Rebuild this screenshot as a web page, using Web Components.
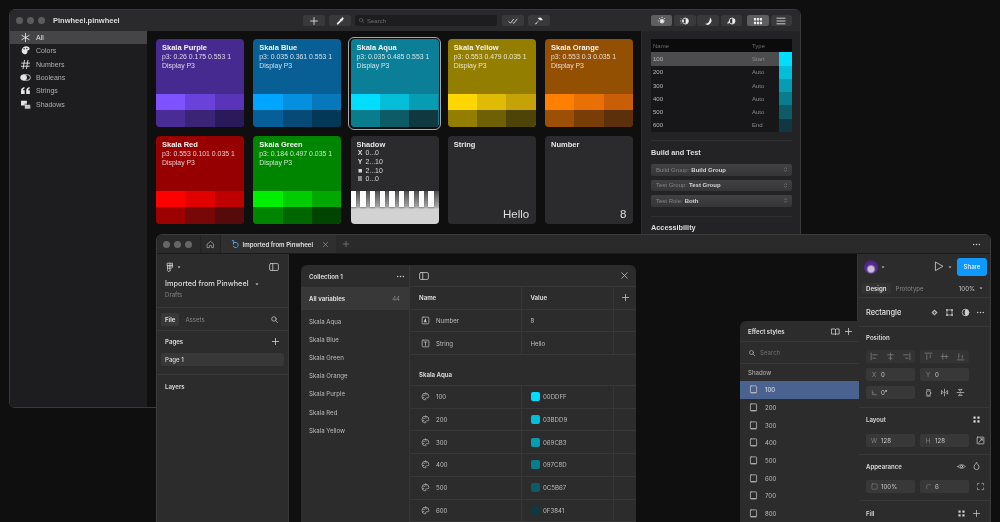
<!DOCTYPE html>
<html>
<head>
<meta charset="utf-8">
<title>Pinwheel</title>
<style>
  html, body { margin: 0; height: 522px; overflow: hidden; background: #0f0f10; }
  body { position: relative; font-family: "Liberation Sans", sans-serif; filter: blur(.4px); }
</style>
</head>
<body>
<pw-window></pw-window>
<fig-window></fig-window>

<script>
// icons, all drawn on a 16x16 box
const S = 'fill="none" stroke="currentColor" stroke-width="1.3" stroke-linecap="round" stroke-linejoin="round"';
const ICONS = {
  all: `<path ${S} stroke-width="2.4" d="M8 2v12M2.8 5l10.4 6M13.2 5 2.8 11"/>`,
  colors: `<path fill="currentColor" d="M7 2c4-1 7 1 7 3.500 0 2-2 2-3 2.500-.8.500.5 2-.5 3.500C9 13.500 6 14 4 12 1.500 9.500 2 3.500 7 2z"/><circle cx="6" cy="5.500" r="1.100" fill="#1d1d1f"/><circle cx="10" cy="5" r="1" fill="#1d1d1f"/>`,
  hash: `<path ${S} stroke-width="1.9" d="M6.500 2 4.500 14M11.500 2l-2 12M2.500 6h11.500M2 10.500h11.500"/>`,
  toggle: `<rect x="1" y="4" width="14" height="8" rx="4" fill="none" stroke="currentColor" stroke-width="1.200"/><rect x="1" y="4" width="9" height="8" rx="4" fill="currentColor"/>`,
  quote: `<path fill="currentColor" d="M1.500 13V8.500C1.500 5.500 3.500 3.500 6.500 3v2.200C5 5.600 4.600 6.500 4.500 7.500h2.300V13zM9 13V8.500C9 5.500 11 3.500 14 3v2.200c-1.500.4-1.900 1.300-2 2.300h2.300V13z"/>`,
  shadows: `<path fill="currentColor" d="M1.500 2.500h8.500v7H1.500z"/><path fill="currentColor" d="M7 8.500h8v5.500H7z" opacity=".85"/><path d="M6.500 7.500H11" stroke="#1d1d1f"/>`,
  plus: `<path ${S} d="M8 2.500v11M2.500 8h11"/>`,
  dropper: `<path fill="currentColor" d="M11 2.500a1.800 1.800 0 0 1 2.500 2.500l-2 2 .7.700-1 1-.7-.7-5.500 5.500H3v-2l5.500-5.500-.7-.7 1-1 .7.700z"/>`,
  checks: `<path ${S} stroke-width="1.600" d="M1.500 9 4 11.500 9 5M8 11l1 .8L14.500 5"/>`,
  hammer: `<path fill="currentColor" d="M6 3.500c2-1.500 4.500-1.200 6 0l2 2-1.500 1.500-1.200-.8-1.300 1-1.300-1.300L3 13.500 1.800 12.300l7-6.500c-.8-1-1.800-1.700-2.800-2.300z"/>`,
  search: `<circle cx="7" cy="7" r="4" ${S}/><path ${S} d="m10 10 3.500 3.500"/>`,
  sun: `<circle cx="8" cy="8" r="3" fill="currentColor"/><path ${S} stroke-dasharray=".6 2.500" d="M8 2v12M2 8h12M3.800 3.800l8.400 8.400M12.200 3.800l-8.400 8.400"/>`,
  sunhalf: `<path fill="currentColor" d="M9 3a5 5 0 0 1 0 10z"/><path ${S} d="M9 3a5 5 0 0 0 0 10"/><circle cx="5" cy="8" r="1.600" fill="currentColor"/><path ${S} stroke-dasharray=".6 2" d="M1 8h2M2 4.500 3.500 6M2 11.500 3.500 10"/>`,
  moon: `<path fill="currentColor" d="M11 2.500A6 6 0 0 1 3 12.500c4 .5 8.500-3.500 8-10z"/>`,
  moonhalf: `<path fill="currentColor" d="M10 3a5 5 0 0 1 0 10z"/><path ${S} d="M10 3a5 5 0 0 0 0 10"/><path fill="currentColor" d="M5.500 6.500a2.800 2.800 0 0 1-4 4.500c1.800 0 3.500-2 4-4.500z"/>`,
  grid: `<g fill="currentColor"><rect x="1.500" y="3" width="3.500" height="4" rx=".6"/><rect x="6.300" y="3" width="3.500" height="4" rx=".6"/><rect x="11" y="3" width="3.500" height="4" rx=".6"/><rect x="1.500" y="9" width="3.500" height="4" rx=".6"/><rect x="6.300" y="9" width="3.500" height="4" rx=".6"/><rect x="11" y="9" width="3.500" height="4" rx=".6"/></g>`,
  list: `<path ${S} stroke-width="1.500" d="M1.500 3.500h13M1.500 8h13M1.500 12.500h13"/>`,
  updown: `<path ${S} d="M5.500 6 8 3.500 10.500 6M5.500 10 8 12.500 10.500 10"/>`,
  home: `<path ${S} d="M2.500 7 8 2.500 13.500 7v6.500h-3.500V10H6v3.500H2.500z"/>`,
  close: `<path ${S} d="m3 3 10 10M13 3 3 13"/>`,
  more: `<g fill="currentColor"><circle cx="3" cy="8" r="1.300"/><circle cx="8" cy="8" r="1.300"/><circle cx="13" cy="8" r="1.300"/></g>`,
  panel: `<rect x="1" y="2.500" width="14" height="11" rx="2" ${S}/><path ${S} d="M6 2.500v11"/>`,
  figma: `<path ${S} d="M4 2h8v4H4zM4 6h8M8 2v12M4 6v4h4M4 10v2a2 2 0 0 0 4 2M8 10a3 2 0 0 0 4-2 2 2 0 0 0-4-2"/>`,
  tabfile: `<path fill="none" stroke="#5aa9e6" stroke-width="1.400" d="M3 2.500h2.500a6 6 0 0 1 0 6v-3h4.500a4.200 4.200 0 1 1-5 5.500"/>`,
  palette: `<path ${S} d="M8 2a6 6 0 1 0-.5 12c1.500 0 1.200-1.200.8-2s.3-1.800 1.500-1.800h2.400C14 10.200 14 9 14 8a6 6 0 0 0-6-6z"/><g fill="currentColor"><circle cx="5.500" cy="6" r="1"/><circle cx="9" cy="5" r="1"/><circle cx="4.800" cy="9.500" r="1"/></g>`,
  num: `<rect x="2" y="2" width="12" height="12" rx="1.500" ${S}/><path fill="currentColor" d="M5 11V9.500L7.500 5h1.500v4.500h1.200V11z"/>`,
  str: `<rect x="2" y="2" width="12" height="12" rx="1.500" ${S}/><path ${S} d="M5.500 5.500h5M8 5.500v6"/>`,
  style: `<rect x="2.500" y="1.500" width="11" height="12" rx="1.200" ${S}/><path ${S} stroke-width="2" d="M3.500 14h9"/>`,
  book: `<path ${S} d="M1.500 3.500h5L8 4.500l1.500-1h5v9h-5L8 13.500l-1.500-1h-5zM8 4.500v9"/>`,
  play: `<path ${S} stroke-width="1.100" d="M3.500 2v12L14 8z"/>`,
  diamond: `<path fill="currentColor" d="M8 2.500 13.500 8 8 13.500 2.500 8z" opacity=".85"/><path stroke="#2c2c2c" stroke-width="1" d="M8 5.500v5M5.500 8h5"/>`,
  frame: `<path ${S} d="M3.500 5v6M12.500 5v6M5 3.500h6M5 12.500h6"/><g fill="currentColor"><rect x="2" y="2" width="3" height="3"/><rect x="11" y="2" width="3" height="3"/><rect x="2" y="11" width="3" height="3"/><rect x="11" y="11" width="3" height="3"/></g>`,
  contrast: `<circle cx="8" cy="8" r="6" ${S}/><path fill="currentColor" d="M8 2a6 6 0 0 1 0 12c-2-3-2-9 0-12z"/>`,
  autolayout: `<g fill="currentColor"><rect x="2.500" y="2.500" width="4" height="4" rx=".6"/><rect x="9.500" y="2.500" width="4" height="4" rx=".6"/><rect x="2.500" y="9.500" width="4" height="4" rx=".6"/><rect x="9.500" y="9.500" width="4" height="4" rx=".6"/></g>`,
  resize: `<rect x="2" y="2" width="12" height="12" rx="1" ${S}/><path ${S} d="M5 11.500 11 5M11 8V5H8"/>`,
  eye: `<path ${S} d="M1.500 8C4 4 12 4 14.500 8 12 12 4 12 1.500 8z"/><circle cx="8" cy="8" r="2" ${S}/>`,
  drop: `<path ${S} d="M8 1.500c2.500 3 4.500 5 4.500 7.500a4.500 4.500 0 0 1-9 0c0-2.500 2-4.500 4.500-7.500z"/>`,
  corners: `<path ${S} d="M2.500 5.500v-3h3M10.500 2.500h3v3M13.500 10.500v3h-3M5.500 13.500h-3v-3"/>`,
  opacity: `<rect x="2" y="2" width="12" height="12" rx="1.500" ${S}/>`,
  radius: `<path ${S} d="M4 13V7a3 3 0 0 1 3-3h6"/>`,
  angle: `<path ${S} d="M3 3v10h10M3 8a5 5 0 0 1 5 5"/>`,
  alignl: `<path ${S} d="M2 2v12M5 5h8M5 11h5" stroke-width="1"/>`,
  alignc: `<path ${S} d="M8 2v12M3 5h10M5 11h6" stroke-width="1"/>`,
  alignr: `<path ${S} d="M14 2v12M3 5h8M6 11h5" stroke-width="1"/>`,
  alignt: `<path ${S} d="M2 2h12M5 5v8M11 5v5" stroke-width="1"/>`,
  alignm: `<path ${S} d="M2 8h12M5 3v10M11 5v6" stroke-width="1"/>`,
  alignb: `<path ${S} d="M2 14h12M5 3v8M11 6v5" stroke-width="1"/>`,
  rotate: `<circle cx="8" cy="9" r="4" ${S}/><path ${S} d="M4 4c2-2 6-2 8 0M4 14c2 1 6 1 8 0"/>`,
  fliph: `<path ${S} d="M8 2v12M2.500 5v6l3-3zM13.500 5v6l-3-3z"/>`,
  flipv: `<path ${S} d="M2 8h12M5 2.500h6l-3 3zM5 13.500h6l-3-3z"/>`,
  chev: `<path fill="currentColor" d="M4 6.500h8L8 11z"/>`
};
function icon(name, size) {
  size = size || 10;
  return `<svg width="${size}" height="${size}" viewBox="0 0 16 16" style="display:block;flex:none">${ICONS[name]}</svg>`;
}

// base class: shadow root filled once from css() + html()
class Box extends HTMLElement {
  constructor() {
    super();
    this._root = this.attachShadow({ mode: 'open' });
  }
  connectedCallback() {
    this._root.innerHTML = `<style>${this.css()}</style>${this.html()}`;
  }
  a(name, dflt) {
    return this.hasAttribute(name) ? this.getAttribute(name) : (dflt === undefined ? '' : dflt);
  }
  css() { return ':host{display:block}'; }
  html() { return '<slot></slot>'; }
}

// ---- Pinwheel (mac window) ----
class PwTool extends Box {
  css() {
    return `:host{display:flex;align-items:center;justify-content:center;height:11px;width:${this.a('w', 22)}px;
      border-radius:2px;background:${this.hasAttribute('on') ? '#5e5e60' : '#39393b'};color:#ececec}`;
  }
  html() { return icon(this.a('icon'), this.a('s', 10)); }
}
customElements.define('pw-tool', PwTool);

class PwSide extends Box {
  css() {
    return `:host{display:flex;align-items:center;height:13.300px;padding-left:9.500px;
      font:400 7px "Liberation Sans",sans-serif;color:#b0b0b2;
      ${this.hasAttribute('on') ? 'background:#454547;color:#e0e0e0;' : ''}}
      .i{width:12px;margin-right:4.500px;display:flex;justify-content:center;color:#e4e4e4}`;
  }
  html() { return `<span class="i">${icon(this.a('icon'), 11)}</span><slot></slot>`; }
}
customElements.define('pw-side', PwSide);

class PwCard extends Box {
  css() {
    return `:host{display:flex;flex-direction:column;height:88px;border-radius:4px;overflow:hidden;box-sizing:border-box;
      background:${this.a('bg')};color:#fff;font:400 6.900px/9px "Liberation Sans",sans-serif;position:relative}
      :host([sel]){overflow:visible}
      .t{flex:1;padding:4px 6px 0}
      b{display:block;font-size:7.500px;color:#f4f4f4}
      .s{opacity:.8;white-space:nowrap}
      .r{display:flex;height:16.700px}
      .r i{flex:1}
      .ring{position:absolute;inset:-2.500px;border:1.500px solid #a9a9ab;border-radius:6px;pointer-events:none}`;
  }
  html() {
    const row = (s, last) => `<div class="r"${last ? ' style="border-radius:0 0 4px 4px;overflow:hidden"' : ''}>` + s.split(',').map(c => `<i style="background:${c}"></i>`).join('') + '</div>';
    return `<div class="t"><b>${this.a('name')}</b><div class="s">p3: ${this.a('p3')}</div><div class="s">Display P3</div></div>`
      + row(this.a('top')) + row(this.a('bottom'), true)
      + (this.hasAttribute('sel') ? '<div class="ring"></div>' : '');
  }
}
customElements.define('pw-card', PwCard);

class PwValueCard extends Box {
  css() {
    return `:host{display:flex;flex-direction:column;height:88px;border-radius:4px;background:#2b2b2d;box-sizing:border-box;
      padding:4px 6.500px 3px 6px;color:#dedede;font:400 11.500px/14px "Liberation Sans",sans-serif}
      b{font-size:7.500px;line-height:9px;color:#e8e8e8}
      .v{margin-top:auto;text-align:right}`;
  }
  html() { return `<b>${this.a('name')}</b><div class="v">${this.a('value')}</div>`; }
}
customElements.define('pw-value-card', PwValueCard);

class PwShadowCard extends Box {
  css() {
    return `:host{display:flex;flex-direction:column;height:88px;border-radius:4px;background:#2b2b2d;overflow:hidden;
      color:#dcdcdc;font:400 6.900px/8.800px "Liberation Sans",sans-serif}
      .t{padding:4px 6px 0;height:51px}
      b{display:block;font-size:7.500px;line-height:9px;color:#e8e8e8}
      .l{display:flex;align-items:center;gap:2px}
      .keys{flex:1;display:flex;gap:4.450px;background:linear-gradient(#4f4f4f,#a8a8a8 16px,#d2d2d2 18px)}
      .keys i{width:5.300px;height:16px;background:#fbfbfb;box-shadow:0 1px 2px rgba(0,0,0,.25)}`;
  }
  html() {
    const L = (g, t) => `<div class="l"><span style="width:7px;font-weight:700;font-size:7px;text-align:center">${g}</span>${t}</div>`;
    let keys = '';
    for (let n = 0; n < 9; n++) keys += '<i></i>';
    return `<div class="t"><b>Shadow</b>${L('X', '0...0')}${L('Y', '2...10')}${L('&#9632;', '2...10')}${L('II', '0...0')}</div><div class="keys">${keys}</div>`;
  }
}
customElements.define('pw-shadow-card', PwShadowCard);

class PwSelect extends Box {
  css() {
    return `:host{display:flex;align-items:center;height:11.500px;padding:0 3px 0 5px;border-radius:2px;
      background:linear-gradient(#414143,#353537);color:#858587;font:400 6px "Liberation Sans",sans-serif;margin-bottom:4px}
      b{color:#d4d4d4;margin-left:2px}
      .u{margin-left:auto;color:#8a8a8a}`;
  }
  html() { return `<span>${this.a('k')}:</span><b>${this.a('v')}</b><span class="u">${icon('updown', 7)}</span>`; }
}
customElements.define('pw-select', PwSelect);

class PwTable extends Box {
  css() {
    return `:host{display:block;font:400 6px "Liberation Sans",sans-serif;color:#bbb;position:relative}
      .h,.r{display:grid;grid-template-columns:99px 42px;height:13.300px;align-items:center}
      .h{background:#0b0b0c;color:#6f6f6f}
      .r{background:#171719}
      .r.on{background:#4c4c4e}
      span{padding-left:2px}
      .c{color:#bbb}
      .r em{font-style:normal;color:#8a8a8a}
      .strip{position:absolute;right:0;top:13.300px;width:13.500px;display:flex;flex-direction:column}
      .strip i{height:13.300px}`;
  }
  html() {
    const rows = [['100', 'Start'], ['200', 'Auto'], ['300', 'Auto'], ['400', 'Auto'], ['500', 'Auto'], ['600', 'End']];
    const cols = ['#00ddff', '#03bdd9', '#069cb3', '#097c8d', '#0c5b67', '#0f3841'];
    return `<div class="h"><span>Name</span><span>Type</span></div>`
      + rows.map((r, i) => `<div class="r${i ? '' : ' on'}"><span class="c">${r[0]}</span><span><em>${r[1]}</em></span></div>`).join('')
      + `<div class="strip">${cols.map(c => `<i style="background:${c}"></i>`).join('')}</div>`;
  }
}
customElements.define('pw-table', PwTable);

class PwWindow extends Box {
  css() {
    return `:host{position:absolute;left:9px;top:9px;width:792px;height:399px;box-sizing:border-box;
      border:1px solid #3a3a3c;border-radius:6px;background:#0f0f10;overflow:hidden;
      display:grid;grid-template-rows:21px 1fr;grid-template-columns:137px minmax(0,1fr) 159px;font-family:"Liberation Sans",sans-serif}
      .bar{grid-column:1/4;background:#2a2a2c;display:flex;align-items:center;padding:0 8px 0 5.500px}
      .lights{display:flex;gap:4px}
      .lights i{width:7px;height:7px;border-radius:50%;background:#5c5c5e}
      .title{width:250px;margin-left:8.500px;font:700 7.500px "Liberation Sans",sans-serif;color:#dcdcdc;white-space:nowrap}
      .group{display:flex;gap:4px}
      .group+.group{margin-left:5px}
      .search{width:142px;height:11px;background:#1d1d1f;border-radius:2px;display:flex;align-items:center;gap:2px;padding-left:3px;box-sizing:border-box;color:#6f6f72;font-size:6px}
      .seg{display:flex;gap:1.700px}
      .sp{flex:1}
      .side{background:#1d1d1f}
      .main{padding:8px 0 8px 9px;display:grid;grid-template-columns:repeat(5,88px);gap:9px 9.250px;align-content:start}
      .right{background:#232325;padding:8px 8px 8px 9px;border-left:1px solid #2c2c2e;overflow:hidden}
      .sec{border-top:1px solid #303032;margin-top:8px;padding-top:7px}
      h3{font:700 7.300px/10px "Liberation Sans",sans-serif;color:#dedede;margin:0 0 6px}`;
  }
  html() {
    const cards = [
      ['Skala Purple', '0.26 0.175 0.553 1', '#462a8f', '#7f52ff,#6b41dc,#5a34b8', '#4a2c96,#3b2475,#2a1a5c'],
      ['Skala Blue', '0.035 0.361 0.553 1', '#075f96', '#00a5ff,#0490de,#0678bb', '#065f99,#064b77,#043858'],
      ['Skala Aqua', '0.035 0.485 0.553 1', '#0a7f97', '#00ddff,#03bdd9,#069cb3', '#097c8d,#0c5b67,#0f3841', 1],
      ['Skala Yellow', '0.553 0.479 0.035 1', '#937e00', '#ffd700,#dfbb06,#c4a208', '#937e00,#6f5f05,#4f4408'],
      ['Skala Orange', '0.553 0.3 0.035 1', '#934f02', '#ff8000,#e87005,#c85f08', '#9c4f05,#793e08,#5b300a'],
      ['Skala Red', '0.553 0.101 0.035 1', '#960000', '#ff0000,#e00000,#bf0000', '#9c0000,#780707,#560a0a'],
      ['Skala Green', '0.184 0.497 0.035 1', '#008500', '#00ee00,#00cc00,#00a800', '#008500,#006600,#004400']
    ];
    return `
    <div class="bar">
      <div class="lights"><i></i><i></i><i></i></div>
      <div class="title">Pinwheel.pinwheel</div>
      <div class="group"><pw-tool icon="plus"></pw-tool><pw-tool icon="dropper"></pw-tool>
        <div class="search">${icon('search', 7)}<span>Search</span></div></div>
      <div class="group"><pw-tool icon="checks"></pw-tool><pw-tool icon="hammer"></pw-tool></div>
      <div class="sp"></div>
      <div class="seg"><pw-tool w="21.5" icon="sun" on></pw-tool><pw-tool w="21.5" icon="sunhalf"></pw-tool><pw-tool w="21.5" icon="moon"></pw-tool><pw-tool w="21.5" icon="moonhalf"></pw-tool></div>
      <div class="seg" style="margin-left:5px;gap:2px"><pw-tool w="21.5" icon="grid" on></pw-tool><pw-tool w="21.5" icon="list"></pw-tool></div>
    </div>
    <div class="side">
      <pw-side icon="all" on>All</pw-side>
      <pw-side icon="colors">Colors</pw-side>
      <pw-side icon="hash">Numbers</pw-side>
      <pw-side icon="toggle">Booleans</pw-side>
      <pw-side icon="quote">Strings</pw-side>
      <pw-side icon="shadows">Shadows</pw-side>
    </div>
    <div class="main">
      ${cards.map(c => `<pw-card name="${c[0]}" p3="${c[1]}" bg="${c[2]}" top="${c[3]}" bottom="${c[4]}"${c[5] ? ' sel' : ''}></pw-card>`).join('')}
      <pw-shadow-card></pw-shadow-card>
      <pw-value-card name="String" value="Hello"></pw-value-card>
      <pw-value-card name="Number" value="8"></pw-value-card>
    </div>
    <div class="right">
      <pw-table></pw-table>
      <div class="sec">
        <h3>Build and Test</h3>
        <pw-select k="Build Group" v="Build Group"></pw-select>
        <pw-select k="Test Group" v="Test Group"></pw-select>
        <pw-select k="Test Role" v="Both"></pw-select>
      </div>
      <div class="sec" style="padding-top:6px;margin-top:9px"><h3>Accessibility</h3></div>
    </div>`;
  }
}
customElements.define('pw-window', PwWindow);

// ---- Figma window ----
const FF = '"Inter","Liberation Sans",sans-serif';

class VarRow extends Box {
  css() {
    return `:host{display:grid;grid-template-columns:111px 92px 1fr;height:22.700px;box-sizing:border-box;border-bottom:1px solid #373737;
      font:400 6.100px ${FF};color:#bdbdbd}
      :host([head]){font-weight:600;color:#e2e2e2}
      div{display:flex;align-items:center;box-sizing:border-box}
      div+div{border-left:1px solid #373737}
      .n{padding-left:${this.hasAttribute('head') ? 9 : 11}px;gap:6px}
      .n svg{color:#bdbdbd}
      .v{padding-left:8.500px;gap:3.500px}
      .sw{width:9px;height:9px;border-radius:2px}
      .a{justify-content:center;color:#ccc}`;
  }
  html() {
    const ic = this.a('icon');
    const col = this.a('color');
    return `<div class="n">${ic ? icon(ic, 9) : ''}<span>${this.a('name')}</span></div>
      <div class="v">${col ? `<i class="sw" style="background:${col}"></i>` : ''}<span>${this.a('value')}</span></div>
      <div class="a">${this.hasAttribute('add') ? icon('plus', 9) : ''}</div>`;
  }
}
customElements.define('var-row', VarRow);

class VarModal extends Box {
  css() {
    return `:host{position:absolute;left:12px;top:11px;width:335px;height:300px;border-radius:6px 6px 0 0;overflow:hidden;background:#2c2c2c;
      display:grid;grid-template-columns:109px 1fr;font:400 6.100px ${FF};color:#bdbdbd}
      .l{border-right:1px solid #373737}
      .hd{height:22px;display:flex;align-items:center;padding:0 4px 0 8px;box-sizing:border-box}
      .hd b{font-weight:600;color:#e0e0e0}
      .ar{margin-left:auto;color:#ccc;display:flex}
      .all{height:23px;background:#383838;display:flex;align-items:center;padding:0 9px 0 8px;font-weight:600;color:#e4e4e4}
      .all span{margin-left:auto;color:#858585;font-weight:400}
      .list{padding-top:2px}
      .it{height:18.200px;display:flex;align-items:center;padding-left:8px}
      .rhd{height:22px;display:flex;align-items:center;justify-content:space-between;padding:0 7px 0 9px;border-bottom:1px solid #373737;box-sizing:border-box;color:#ccc}
      .gap{height:31px;display:flex;align-items:flex-end;box-sizing:border-box;border-bottom:1px solid #373737;padding:0 0 7px 9px;font-weight:600;color:#e0e0e0}`;
  }
  html() {
    const names = ['Skala Aqua', 'Skala Blue', 'Skala Green', 'Skala Orange', 'Skala Purple', 'Skala Red', 'Skala Yellow'];
    const rows = [['100', '00DDFF', '#00ddff'], ['200', '03BDD9', '#03bdd9'], ['300', '069CB3', '#069cb3'], ['400', '097C8D', '#097c8d'], ['500', '0C5B67', '#0c5b67'], ['600', '0F3841', '#0f3841']];
    return `
    <div class="l">
      <div class="hd"><b>Collection 1</b><span class="ar">${icon('more', 9)}</span></div>
      <div class="all">All variables<span>44</span></div>
      <div class="list">${names.map(n => `<div class="it">${n}</div>`).join('')}</div>
    </div>
    <div>
      <div class="rhd">${icon('panel', 10)}${icon('close', 9)}</div>
      <var-row head add name="Name" value="Value"></var-row>
      <var-row icon="num" name="Number" value="8"></var-row>
      <var-row icon="str" name="String" value="Hello"></var-row>
      <div class="gap">Skala Aqua</div>
      ${rows.map(r => `<var-row icon="palette" name="${r[0]}" value="${r[1]}" color="${r[2]}"></var-row>`).join('')}
    </div>`;
  }
}
customElements.define('var-modal', VarModal);

class EffectPanel extends Box {
  css() {
    return `:host{position:absolute;left:583px;top:86px;width:119px;height:220px;background:#2c2c2c;border-radius:6px 0 0 0;
      font:400 6.100px ${FF};color:#bdbdbd;overflow:hidden}
      .hd{height:21px;display:flex;align-items:center;gap:4px;padding:0 6px 0 8px;box-sizing:border-box;border-bottom:1px solid #373737;color:#e0e0e0;font-weight:600}
      .hd .sp{flex:1}
      .sr{height:22px;display:flex;align-items:center;gap:4px;padding:0 8px;border-bottom:1px solid #373737;box-sizing:border-box;color:#6f6f6f}
      .sr svg{color:#bbb}
      .gr{height:17px;display:flex;align-items:center;padding-left:8px;color:#b8b8b8}
      .r{height:17.700px;display:flex;align-items:center;gap:7px;padding-left:9px}
      .r.on{background:#4a628f;color:#dfe5ef}
      .r svg{color:#c8c8c8}`;
  }
  html() {
    const rows = ['100', '200', '300', '400', '500', '600', '700', '800'];
    return `<div class="hd"><span>Effect styles</span><span class="sp"></span>${icon('book', 9)}${icon('plus', 9)}</div>
      <div class="sr">${icon('search', 8)}<span>Search</span></div>
      <div class="gr">Shadow</div>
      ${rows.map((r, i) => `<div class="r${i ? '' : ' on'}">${icon('style', 9)}<span>${r}</span></div>`).join('')}`;
  }
}
customElements.define('effect-panel', EffectPanel);

class FigField extends Box {
  css() {
    return `:host{display:flex;align-items:center;gap:3px;width:49px;height:13px;box-sizing:border-box;padding-left:4px;flex:none;
      background:#383838;border-radius:2px;font:400 6.100px ${FF};color:#c8c8c8}
      .k{color:#858585;width:8px;display:flex;justify-content:center}`;
  }
  html() {
    const ic = this.a('icon');
    return `<span class="k">${ic ? icon(ic, 7) : this.a('k')}</span><span>${this.a('v')}</span>`;
  }
}
customElements.define('fig-field', FigField);

class FigRight extends Box {
  css() {
    return `:host{display:block;background:#2c2c2c;font:400 6.100px ${FF};color:#c4c4c4;border-left:1px solid #373737;box-sizing:border-box;overflow:hidden}
      section{border-bottom:1px solid #373737;padding:0 9px 0 8px;box-sizing:border-box}
      .top{height:25px;display:flex;align-items:center;padding:0 3px 0 6px;border:0}
      .ava{width:14px;height:14px;border-radius:50%;background:radial-gradient(circle at 50% 65%,#cbbcd9 0 24%,#5b2e90 40%,#3a1a6a);margin-right:2px}
      .share{width:30px;height:18px;border-radius:3px;background:#0d99ff;color:#e8f4ff;display:flex;align-items:center;justify-content:center;font-weight:500;margin-left:4px}
      .tabs{height:19px;display:flex;align-items:center;padding:0 6px 0 4px}
      .tab{padding:2px 4px;border-radius:2px;font-weight:600;color:#e0e0e0;background:#333}
      .tab2{padding:2px 5px;color:#858585}
      .sel{height:29px;display:flex;align-items:center;gap:6.500px;font-size:7.400px;font-weight:500;color:#e2e2e2;padding-right:5px}
      .sel .n{flex:1}
      .sel svg{color:#ccc}
      .hdr{display:flex;align-items:center;justify-content:space-between;font-weight:600;color:#dadada;height:21px;padding-right:0}
      .row{display:flex;align-items:center;gap:5px;height:18px}
      .al{display:flex;width:49px;height:13px;justify-content:space-around;align-items:center;color:#858585;flex:none;border-radius:2px;background:#333}
      .ic{display:flex;gap:4px;color:#ccc;align-items:center}
      .pos{height:81px}
      .lay{height:47px;padding-top:1px}
      .app{height:46px;padding-top:1px}`;
  }
  html() {
    const al = names => `<div class="al">${names.map(n => icon(n, 9)).join('')}</div>`;
    return `
    <section class="top"><span class="ava"></span>${icon('chev', 6)}<span style="flex:1"></span>${icon('play', 11)}<span style="margin-left:3px">${icon('chev', 6)}</span><span class="share">Share</span></section>
    <section class="tabs"><span class="tab">Design</span><span class="tab2">Prototype</span><span style="flex:1"></span><span>100%</span><span style="margin-left:3px">${icon('chev', 6)}</span></section>
    <section class="sel"><span class="n">Rectangle</span>${icon('diamond', 9)}${icon('frame', 9)}${icon('contrast', 9)}${icon('more', 9)}</section>
    <section class="pos">
      <div class="hdr">Position</div>
      <div class="row" style="height:17px">${al(['alignl', 'alignc', 'alignr'])}${al(['alignt', 'alignm', 'alignb'])}</div>
      <div class="row"><fig-field k="X" v="0"></fig-field><fig-field k="Y" v="0"></fig-field></div>
      <div class="row"><fig-field icon="angle" v="0°"></fig-field><div class="al" style="background:transparent;color:#c4c4c4">${icon('rotate', 9)}${icon('fliph', 9)}${icon('flipv', 9)}</div></div>
    </section>
    <section class="lay">
      <div class="hdr"><span>Layout</span>${icon('autolayout', 9)}</div>
      <div class="row" style="margin-top:1px"><fig-field k="W" v="128"></fig-field><fig-field k="H" v="128"></fig-field><span style="margin-left:2px;color:#ccc">${icon('resize', 9)}</span></div>
    </section>
    <section class="app">
      <div class="hdr"><span>Appearance</span><span class="ic">${icon('eye', 9)}<span style="margin-left:2px">${icon('drop', 9)}</span></span></div>
      <div class="row"><fig-field icon="opacity" v="100%"></fig-field><fig-field icon="radius" v="6"></fig-field><span style="margin-left:2px;color:#aaa">${icon('corners', 9)}</span></div>
    </section>
    <section style="border:0;padding-top:2px"><div class="hdr"><span>Fill</span><span class="ic">${icon('autolayout', 9)}<span style="margin-left:2px">${icon('plus', 9)}</span></span></div></section>`;
  }
}
customElements.define('fig-right', FigRight);

class FigLeft extends Box {
  css() {
    return `:host{display:block;background:#2c2c2c;font:400 6.100px ${FF};color:#d0d0d0;border-right:1px solid #373737;box-sizing:border-box}
      section{border-bottom:1px solid #373737;box-sizing:border-box;padding:0 9px 0 8px}
      .head{height:54px;padding-top:7px}
      .logo{display:flex;align-items:center;justify-content:space-between;height:12px;color:#ccc}
      .logo span{display:flex;align-items:center;gap:1px}
      h2{margin:6px 0 0;font:500 7.300px ${FF};color:#dcdcdc;display:flex;align-items:center;gap:5px;white-space:nowrap}
      .d{margin-top:3px;color:#858585}
      .tabs{height:23px;display:flex;align-items:center;padding-left:4px;color:#858585;gap:3px}
      .tabs b{font-weight:600;color:#e2e2e2;background:#383838;padding:3px 4px;border-radius:2px}
      .tabs svg{margin-left:auto;color:#ccc}
      .pages{height:44px;padding:0 4px}
      .ph{height:20px;display:flex;justify-content:space-between;align-items:center;font-weight:600;padding:0 4px;color:#dcdcdc}
      .pg{height:13px;background:#383838;border-radius:2px;display:flex;align-items:center;padding-left:4px;margin-top:2px;font-weight:500;color:#dcdcdc}
      .lay{padding:8px 8px;font-weight:600;color:#dcdcdc;border:0}`;
  }
  html() {
    return `
    <section class="head">
      <div class="logo"><span>${icon('figma', 10)}${icon('chev', 6)}</span>${icon('panel', 10)}</div>
      <h2>Imported from Pinwheel ${icon('chev', 6)}</h2>
      <div class="d">Drafts</div>
    </section>
    <section class="tabs"><b>File</b><span style="margin-left:3px">Assets</span>${icon('search', 9)}</section>
    <section class="pages">
      <div class="ph"><span>Pages</span>${icon('plus', 9)}</div>
      <div class="pg">Page 1</div>
    </section>
    <section class="lay">Layers</section>`;
  }
}
customElements.define('fig-left', FigLeft);

class FigWindow extends Box {
  css() {
    return `:host{position:absolute;left:156px;top:234px;width:835px;height:310px;box-sizing:border-box;border:1px solid #3c3c3c;border-radius:6px 6px 0 0;
      background:#0f0f0f;overflow:hidden;display:grid;grid-template-rows:19px 1fr;grid-template-columns:132px minmax(0,1fr) 133px;font:400 6.100px ${FF}}
      .bar{grid-column:1/4;background:#2a2a2a;display:flex;align-items:center;color:#c4c4c4;border-bottom:1px solid #1a1a1a}
      .lights{display:flex;gap:4px;padding:0 8.500px 0 5.500px;height:100%;align-items:center;border-right:1px solid #222}
      .lights i{width:7px;height:7px;border-radius:50%;background:#666}
      .home{width:19px;height:100%;display:flex;align-items:center;justify-content:center;border-right:1px solid #222;color:#aaa}
      .tab{height:100%;width:115px;background:#2f2f2f;display:flex;align-items:center;gap:3px;padding-left:8.500px;box-sizing:border-box;color:#e0e0e0;font-weight:600;white-space:nowrap}
      .tab .x{margin-left:6px;color:#aaa;font-weight:400}
      .add{margin-left:6px;color:#888}
      .more{margin-left:auto;margin-right:9px;color:#ccc}
      .canvas{position:relative}`;
  }
  html() {
    return `
    <div class="bar">
      <div class="lights"><i></i><i></i><i></i></div>
      <div class="home">${icon('home', 9)}</div>
      <div class="tab">${icon('tabfile', 10)}<span>Imported from Pinwheel</span><span class="x">${icon('close', 7)}</span></div>
      <span class="add">${icon('plus', 8)}</span>
      <span class="more">${icon('more', 9)}</span>
    </div>
    <fig-left></fig-left>
    <div class="canvas"><var-modal></var-modal></div>
    <fig-right></fig-right>
    <effect-panel style="z-index:2"></effect-panel>`;
  }
}
customElements.define('fig-window', FigWindow);
</script>
</body>
</html>
